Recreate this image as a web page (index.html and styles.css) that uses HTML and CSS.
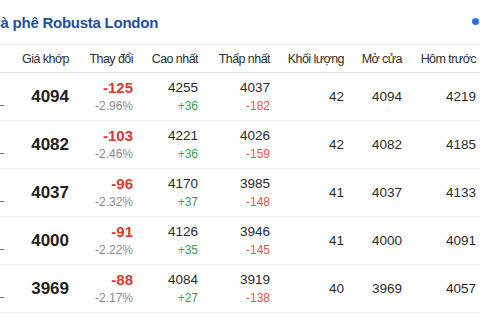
FILE: index.html
```html
<!DOCTYPE html>
<html lang="vi">
<head>
<meta charset="utf-8">
<link rel="stylesheet" href="styles.css">
</head>
<body>
<div class="card">
  <div class="title-bar">
    <h2 class="title">Cà phê Robusta London</h2>
    <span class="dot"></span>
  </div>
  <div class="table">
    <div class="row head">
      <div class="cell lead"></div>
      <div class="cell">Giá khớp</div>
      <div class="cell">Thay đổi</div>
      <div class="cell">Cao nhất</div>
      <div class="cell">Thấp nhất</div>
      <div class="cell">Khối lượng</div>
      <div class="cell">Mở cửa</div>
      <div class="cell">Hôm trước</div>
    </div>

    <div class="row">
      <div class="cell lead"><span class="dash"></span></div>
      <div class="cell price">4094</div>
      <div class="cell stack"><span class="chg">-125</span><span class="pct">-2.96%</span></div>
      <div class="cell stack"><span class="v">4255</span><span class="up">+36</span></div>
      <div class="cell stack"><span class="v">4037</span><span class="down">-182</span></div>
      <div class="cell num">42</div>
      <div class="cell num">4094</div>
      <div class="cell num">4219</div>
    </div>

    <div class="row">
      <div class="cell lead"><span class="dash"></span></div>
      <div class="cell price">4082</div>
      <div class="cell stack"><span class="chg">-103</span><span class="pct">-2.46%</span></div>
      <div class="cell stack"><span class="v">4221</span><span class="up">+36</span></div>
      <div class="cell stack"><span class="v">4026</span><span class="down">-159</span></div>
      <div class="cell num">42</div>
      <div class="cell num">4082</div>
      <div class="cell num">4185</div>
    </div>

    <div class="row">
      <div class="cell lead"><span class="dash"></span></div>
      <div class="cell price">4037</div>
      <div class="cell stack"><span class="chg">-96</span><span class="pct">-2.32%</span></div>
      <div class="cell stack"><span class="v">4170</span><span class="up">+37</span></div>
      <div class="cell stack"><span class="v">3985</span><span class="down">-148</span></div>
      <div class="cell num">41</div>
      <div class="cell num">4037</div>
      <div class="cell num">4133</div>
    </div>

    <div class="row">
      <div class="cell lead"><span class="dash"></span></div>
      <div class="cell price">4000</div>
      <div class="cell stack"><span class="chg">-91</span><span class="pct">-2.22%</span></div>
      <div class="cell stack"><span class="v">4126</span><span class="up">+35</span></div>
      <div class="cell stack"><span class="v">3946</span><span class="down">-145</span></div>
      <div class="cell num">41</div>
      <div class="cell num">4000</div>
      <div class="cell num">4091</div>
    </div>

    <div class="row">
      <div class="cell lead"><span class="dash"></span></div>
      <div class="cell price">3969</div>
      <div class="cell stack"><span class="chg">-88</span><span class="pct">-2.17%</span></div>
      <div class="cell stack"><span class="v">4084</span><span class="up">+27</span></div>
      <div class="cell stack"><span class="v">3919</span><span class="down">-138</span></div>
      <div class="cell num">40</div>
      <div class="cell num">3969</div>
      <div class="cell num">4057</div>
    </div>
  </div>
</div>
</body>
</html>
```

FILE: styles.css
```css
html, body {
  margin: 0;
  padding: 0;
  background: #ffffff;
}
body {
  width: 480px;
  height: 320px;
  overflow: hidden;
  font-family: "Liberation Sans", Arial, sans-serif;
  color: #222;
}
.card {
  width: 480px;
}
.title-bar {
  height: 45px;
  display: flex;
  align-items: center;
  justify-content: space-between;
  border-bottom: 1px solid #eeeef2;
  box-sizing: border-box;
}
.title {
  margin: 0 0 0 -10px;
  font-size: 15px;
  font-weight: 700;
  color: #1f4f9f;
  letter-spacing: -0.25px;
}
.dot {
  width: 7px;
  height: 7px;
  border-radius: 50%;
  background: #2a6fe6;
  margin-right: 1px;
  margin-bottom: 1px;
}
.table {
  display: flex;
  flex-direction: column;
}
.row {
  display: grid;
  grid-template-columns: 19px 50px 64px 65px 72px 74px 58px 74px;
  height: 48px;
  border-bottom: 1px solid #eceef3;
  box-sizing: border-box;
  align-items: center;
}
.row.head {
  height: 28px;
  border-bottom: 1px solid #e4e5ea;
  font-size: 12.5px;
  color: #2e2e2e;
  letter-spacing: -0.55px;
}
.cell {
  text-align: right;
}
.lead {
  height: 100%;
  display: flex;
  align-items: flex-end;
  justify-content: flex-start;
}
.dash {
  width: 4px;
  height: 1.5px;
  background: #e0483c;
  margin-bottom: 14px;
}
.price {
  font-size: 17px;
  font-weight: 700;
  color: #222;
}
.stack {
  display: flex;
  flex-direction: column;
  align-items: flex-end;
  line-height: 18px;
}
.chg {
  font-size: 15px;
  font-weight: 700;
  color: #d93a2f;
}
.pct {
  font-size: 12px;
  color: #8a8a8a;
}
.v {
  font-size: 13.5px;
  color: #2a2a2a;
}
.up {
  font-size: 12px;
  color: #3d9a4c;
}
.down {
  font-size: 12px;
  color: #e0564a;
}
.num {
  font-size: 13.5px;
  color: #2a2a2a;
}
```
